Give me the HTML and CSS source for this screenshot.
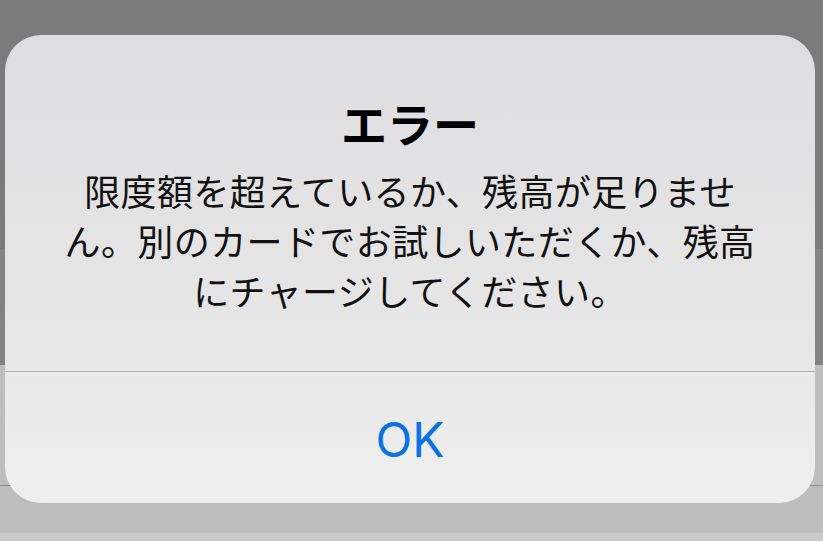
FILE: index.html
```html
<!DOCTYPE html>
<html>
<head>
    <title>エラー</title>
    <link rel="stylesheet" href="styles.css">
</head>
<body>
    <!-- Dimmed page behind the alert -->
    <div class="page">
        <div class="page-top"></div>
        <div class="page-band"></div>
        <div class="page-list"></div>
        <div class="page-foot"></div>
        <div class="page-bar"></div>
    </div>

    <!-- Alert dialog -->
    <div class="alert">
        <div class="alert-body">
            <h2 class="alert-title">エラー</h2>
            <p class="alert-message">限度額を超えているか、残高が足りませ<br>ん。別のカードでお試しいただくか、残高<br>にチャージしてください。</p>
        </div>
        <div class="alert-button">OK</div>
    </div>
</body>
</html>
```

FILE: styles.css
```css
body {
    margin: 0;
    width: 823px;
    height: 541px;
    overflow: hidden;
    font-family: "Noto Sans CJK JP", "Noto Sans", sans-serif;
    background-color: #7b7b7b;
}

.page-top {
    height: 249px;
    background-color: #7b7b7b;
}

.page-band {
    height: 116px;
    background-color: #838383;
}

.page-list {
    height: 120px;
    background-color: #bebebe;
    border-bottom: 1px solid #8c8c8c;
}

.page-foot {
    height: 47px;
    background-color: #bdbdbd;
}

.page-bar {
    height: 8px;
    background-color: #cbcbcb;
}

.alert {
    position: absolute;
    top: 35px;
    left: 5px;
    width: 810px;
    height: 468px;
    border-radius: 36px;
    background: linear-gradient(to bottom, #dedee0 0%, #e6e6e7 60%, #efefef 100%);
    display: flex;
    flex-direction: column;
    overflow: hidden;
}

.alert-body {
    padding: 62px 20px 56px;
    text-align: center;
    border-bottom: 1px solid #b3b3b3;
}

.alert-title {
    margin: 0 0 18px;
    font-size: 46px;
    line-height: 50px;
    font-weight: bold;
    color: #000;
}

.alert-message {
    margin: 0;
    font-size: 36px;
    line-height: 50px;
    letter-spacing: 0.4px;
    color: #111;
    white-space: nowrap;
}

.alert-button {
    flex: 1;
    display: flex;
    justify-content: center;
    align-items: center;
    padding-top: 4px;
    font-family: "Inter", "Noto Sans", sans-serif;
    font-size: 48px;
    color: #0a72e6;
    cursor: pointer;
}
```
